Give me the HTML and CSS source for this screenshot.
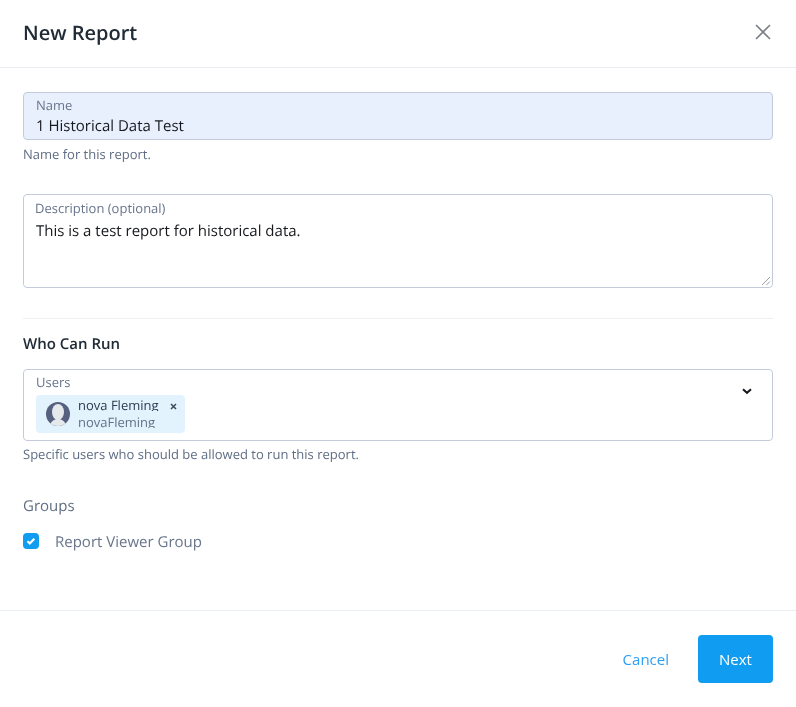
FILE: index.html
```html
<!DOCTYPE html>
<html lang="en">
<head>
<meta charset="utf-8">
<title>New Report</title>
<link rel="stylesheet" href="styles.css">
</head>
<body>
<div class="modal">
  <header class="modal-header">
    <h1 class="modal-title">New Report</h1>
    <svg class="close-icon" width="16" height="16" viewBox="0 0 16 16"><path d="M1 1l14 14M15 1L1 15" stroke="#7b7f85" stroke-width="1.6" fill="none"/></svg>
  </header>
  <main class="modal-body">
    <div class="field field-name">
      <span class="field-label">Name</span>
      <span class="field-value">1 Historical Data Test</span>
    </div>
    <p class="hint">Name for this report.</p>
    <div class="field field-desc">
      <span class="field-label">Description (optional)</span>
      <span class="field-value">This is a test report for historical data.</span>
      <svg class="resize-grip" width="10" height="10" viewBox="0 0 10 10"><path d="M1 9l8-8M5.500 9l3.500-3.500" stroke="#9a9ea5" stroke-width="1" fill="none"/></svg>
    </div>
    <hr class="divider">
    <h2 class="section-title">Who Can Run</h2>
    <div class="field field-users">
      <span class="field-label">Users</span>
      <div class="chip">
        <svg class="avatar" width="24" height="24" viewBox="0 0 24 24"><defs><clipPath id="avatar-clip"><circle cx="12" cy="12" r="12"/></clipPath></defs><g clip-path="url(#avatar-clip)"><rect width="24" height="24" fill="#56607f"/><ellipse cx="12" cy="10" rx="6" ry="8" fill="#e6e9ec"/><path d="M4 24c1-5 4-7 8-7s7 2 8 7z" fill="#e6e9ec"/></g></svg>
        <div class="chip-text">
          <span class="chip-name">nova Fleming</span>
          <span class="chip-sub">novaFleming</span>
        </div>
        <svg class="chip-x" width="7" height="7" viewBox="0 0 7 7"><path d="M1 1l5 5M6 1L1 6" stroke="#3d4a5c" stroke-width="1.500" fill="none"/></svg>
      </div>
      <svg class="chevron" width="10" height="7" viewBox="0 0 10 7"><path d="M1 1.200l4 3.600 4-3.600" stroke="#16191d" stroke-width="2" fill="none"/></svg>
    </div>
    <p class="hint hint-users">Specific users who should be allowed to run this report.</p>
    <h3 class="group-title">Groups</h3>
    <label class="check-row">
      <svg class="checkbox" width="16" height="16" viewBox="0 0 16 16"><rect width="16" height="16" rx="4" fill="#109cf1"/><path d="M4.500 8.200l2.300 2.200 4.500-4.600" stroke="#fff" stroke-width="2.200" fill="none"/></svg>
      <span class="check-label">Report Viewer Group</span>
    </label>
  </main>
  <footer class="modal-footer">
    <button class="btn btn-link" type="button">Cancel</button>
    <button class="btn btn-primary" type="button">Next</button>
  </footer>
</div>
</body>
</html>
```
FILE: styles.css
```css
* { box-sizing: border-box; }
html, body { margin: 0; padding: 0; background: #fff; }
body { font-family: "Open Sans", "Noto Sans", sans-serif; color: #212b36; text-rendering: geometricPrecision; }
.modal { width: 796px; height: 707px; display: flex; flex-direction: column; will-change: transform; }
.modal-header {
  height: 68px; padding: 0 25px 2px 23px; display: flex; align-items: center; justify-content: space-between;
  border-bottom: 1px solid #e9ecf1;
}
.close-icon { margin-top: -1px; }
.modal-title { margin: 0; font-size: 20px; line-height: 28px; font-weight: 600; color: #212b36; }
.modal-body { flex: 1; padding: 24px 23px 0; }
.field { position: relative; border: 1px solid #c3cbdb; border-radius: 4px; display: block; }
.field-label { display: block; font-size: 13px; line-height: 17px; color: #68758c; }
.field-value { display: block; font-size: 15px; line-height: 20px; color: #16191d; }
.field-name { height: 48px; background: #e8f0fe; padding: 4px 12px 0; }
.field-name .field-value { margin-top: 2px; }
.field-desc { height: 94px; margin-top: 31px; padding: 5px 11px 0; }
.field-desc .field-value { margin-top: 4px; margin-left: 1px; }
.resize-grip { position: absolute; right: 1px; bottom: 1px; }
.hint { margin: 5px 0 0; font-size: 13px; line-height: 18px; color: #5f6d84; }
.hint-users { margin-top: 4px; }
.divider { border: 0; border-top: 1px solid #eef0f4; margin: 30px 0 0; }
.section-title { margin: 15px 0 0; font-size: 15px; line-height: 21px; font-weight: 600; color: #212b36; }
.field-users { height: 72px; margin-top: 14px; padding: 4px 12px 0; }
.chip {
  display: flex; align-items: center; width: 149px; height: 38px; margin-top: 4px;
  background: #e3f3fd; border-radius: 4px; padding-left: 10px;
}
.avatar { flex: none; }
.chip-text { display: flex; flex-direction: column; gap: 3px; margin-left: 8px; height: 38px; padding-top: 2px; }
.chip-name, .chip-sub { flex: none; display: block; height: 14px; overflow: hidden; font-size: 13px; line-height: 17px; }
.chip-name { color: #2c3a4e; }
.chip-sub { color: #647187; }
.chip-x { flex: none; margin-left: 11px; margin-top: -15px; }
.chevron { position: absolute; right: 20px; top: 18px; }
.group-title { margin: 33px 0 0; font-size: 15px; line-height: 21px; font-weight: 400; color: #5f6d84; }
.check-row { display: flex; align-items: center; gap: 16px; margin-top: 14px; height: 20px; }
.checkbox { flex: none; }
.check-label { font-size: 15px; line-height: 20px; color: #68758c; margin-top: 2px; }
.modal-footer {
  height: 97px; border-top: 1px solid #e9eef5; display: flex; align-items: flex-start; justify-content: flex-end;
  padding: 24px 23px 0 0; gap: 29px;
}
.btn { font-family: inherit; font-size: 15px; border: 0; border-radius: 4px; cursor: pointer; }
.btn-link { background: none; color: #2c9ff2; height: 48px; padding: 0; }
.btn-primary { background: #109cf1; color: #fff; width: 75px; height: 48px; padding: 0; }
```
